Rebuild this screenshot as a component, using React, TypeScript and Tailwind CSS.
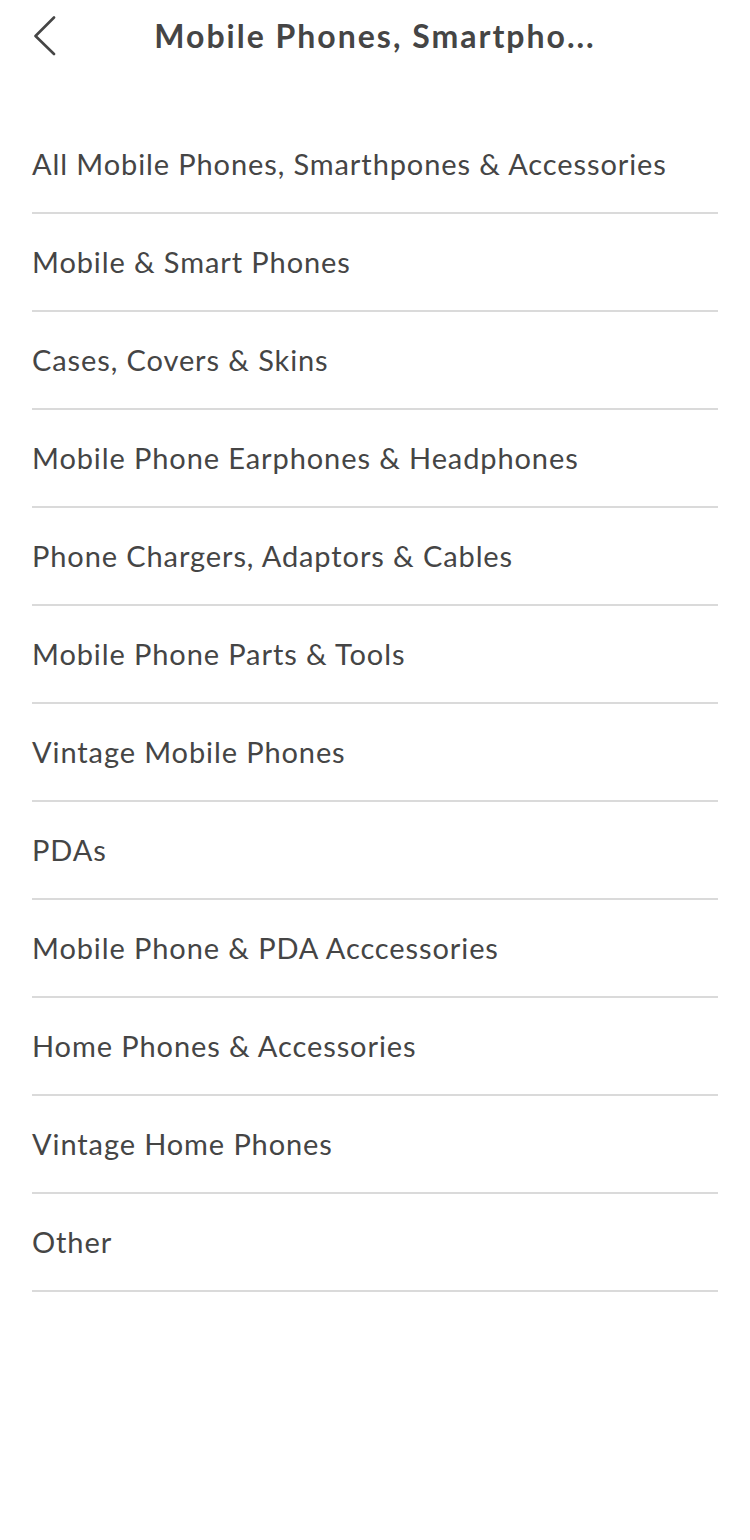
const categories = [
  "All Mobile Phones, Smarthpones & Accessories",
  "Mobile & Smart Phones",
  "Cases, Covers & Skins",
  "Mobile Phone Earphones & Headphones",
  "Phone Chargers, Adaptors & Cables",
  "Mobile Phone Parts & Tools",
  "Vintage Mobile Phones",
  "PDAs",
  "Mobile Phone & PDA Acccessories",
  "Home Phones & Accessories",
  "Vintage Home Phones",
  "Other",
];

export default function App() {
  return (
    <div className="min-h-[1540px] w-[750px] bg-white font-['Lato',sans-serif] text-[#454545]">
      <header className="relative flex h-[72px] items-center justify-center">
        <button className="absolute left-[33px] top-[16px] h-[40px] w-[24px]" aria-label="Back">
          <svg viewBox="0 0 24 40" className="h-full w-full" fill="none" stroke="#454545" strokeWidth={2.6} strokeLinecap="round" strokeLinejoin="round">
            <path d="M21 1.5 L2.5 20 L21 38" />
          </svg>
        </button>
        <h1 className="text-[32px] font-bold tracking-[2px]">Mobile Phones, Smartpho...</h1>
      </header>

      <ul className="mt-[44px] px-[32px]">
        {categories.map((c) => (
          <li key={c} className="flex h-[98px] items-center border-b-2 border-[#dadada] pb-[1px] text-[29px] tracking-[0.9px]">
            {c}
          </li>
        ))}
      </ul>
    </div>
  );
}
